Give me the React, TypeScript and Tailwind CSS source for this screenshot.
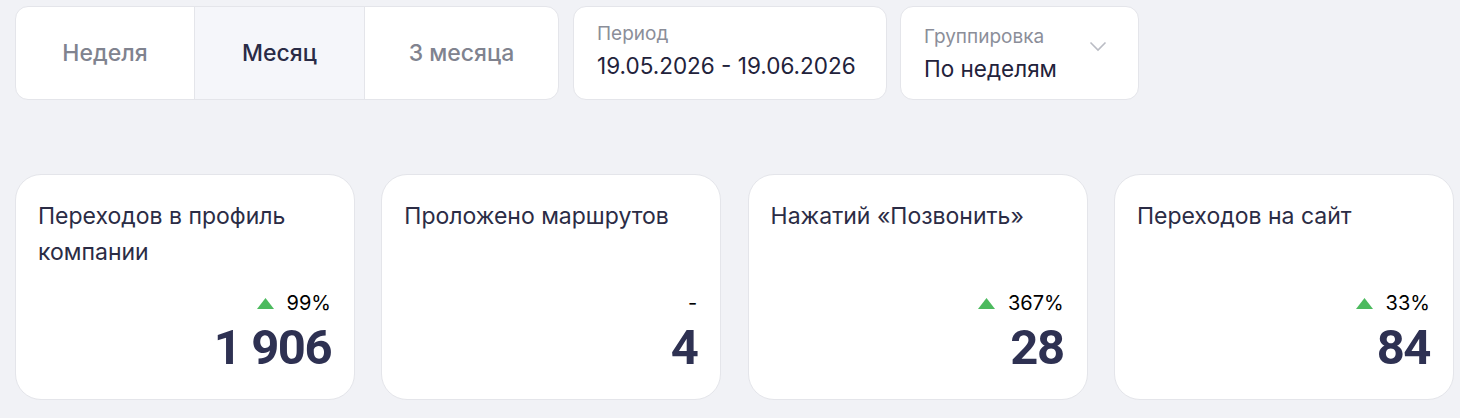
interface Metric {
    title: string
    change: string | null
    value: string
}

const metrics: Metric[] = [
    { title: "Переходов в профиль компании", change: "99%", value: "1 906" },
    { title: "Проложено маршрутов", change: null, value: "4" },
    { title: "Нажатий «Позвонить»", change: "367%", value: "28" },
    { title: "Переходов на сайт", change: "33%", value: "84" },
]

// ширины сегментов подобраны по макету
const periods = [
    { label: "Неделя", w: "w-[178px]" },
    { label: "Месяц", w: "w-[170px]" },
    { label: "3 месяца", w: "w-[194px]" },
]

function Triangle() {
    return (
        <svg width="17" height="11" viewBox="0 0 17 11" className="mr-[13px]">
            <path d="M8.5 0 L17 11 L0 11 Z" fill="#4cba5e" />
        </svg>
    )
}

function Chevron() {
    return (
        <svg width="18" height="11" viewBox="0 0 18 11" className="text-[#babcc4]">
            <polyline points="1.5,1.5 9,9 16.5,1.5" fill="none" stroke="currentColor" strokeWidth="1.6" />
        </svg>
    )
}

function MetricCard({ metric }: { metric: Metric }) {
    return (
        <div className="w-[340px] h-[226px] shrink-0 bg-white rounded-[26px] border border-[#e4e5ea] pl-[22px] pr-[23px] pt-[23px] pb-[22px] flex flex-col justify-between">
            <div className="text-[23px] leading-[36px] text-[#2b2c45] pr-4">{metric.title}</div>
            <div className="flex flex-col items-end">
                <div className="flex items-center h-[26px] text-[20px] text-black">
                    {metric.change ? (
                        <>
                            <Triangle />
                            {metric.change}
                        </>
                    ) : (
                        "-"
                    )}
                </div>
                <div
                    className="mt-[3px] text-[49px] leading-[58px] font-bold text-[#2e3152] tracking-[-1.5px]"
                    style={{ fontFamily: "Roboto, 'Noto Sans', sans-serif" }}
                >
                    {metric.value}
                </div>
            </div>
        </div>
    )
}

export default function App() {
    return (
        <div
            className="min-h-screen bg-[#f1f2f6] pl-[15px] pt-[6px]"
            style={{ fontFamily: "Inter, 'Noto Sans', sans-serif" }}
        >
            <div className="flex">
                {/* Переключатель периода */}
                <div className="flex h-[94px] bg-white rounded-[13px] border border-[#e4e5ea] overflow-hidden">
                    {periods.map((p, i) => (
                        <div
                            key={p.label}
                            className={
                                p.w +
                                " flex items-center justify-center text-[23px] font-medium " +
                                (i > 0 ? "border-l border-[#e4e5ea] " : "") +
                                (i === 1 ? "bg-[#f5f6fa] text-[#2a2b46]" : "text-[#80838f]")
                            }
                        >
                            {p.label}
                        </div>
                    ))}
                </div>

                <div className="ml-[14px] w-[314px] h-[94px] bg-white rounded-[13px] border border-[#e4e5ea] pl-[23px] pt-[14px]">
                    <div className="text-[19px] leading-[26px] text-[#8b8e99]">Период</div>
                    <div className="text-[22.5px] leading-[30px] mt-[4px] text-[#22223b]">19.05.2026 - 19.06.2026</div>
                </div>

                <div className="ml-[13px] w-[239px] h-[94px] bg-white rounded-[13px] border border-[#e4e5ea] pl-[23px] pr-[31px] flex items-center justify-between">
                    <div className="pt-[2px]">
                        <div className="text-[19px] leading-[26px] text-[#8b8e99]">Группировка</div>
                        <div className="text-[22.5px] leading-[30px] mt-[4px] text-[#22223b]">По неделям</div>
                    </div>
                    <div className="-mt-[14px]">
                        <Chevron />
                    </div>
                </div>
            </div>

            <div className="flex gap-[26.3px] mt-[74px]">
                {metrics.map((m) => (
                    <MetricCard key={m.title} metric={m} />
                ))}
            </div>
        </div>
    )
}
